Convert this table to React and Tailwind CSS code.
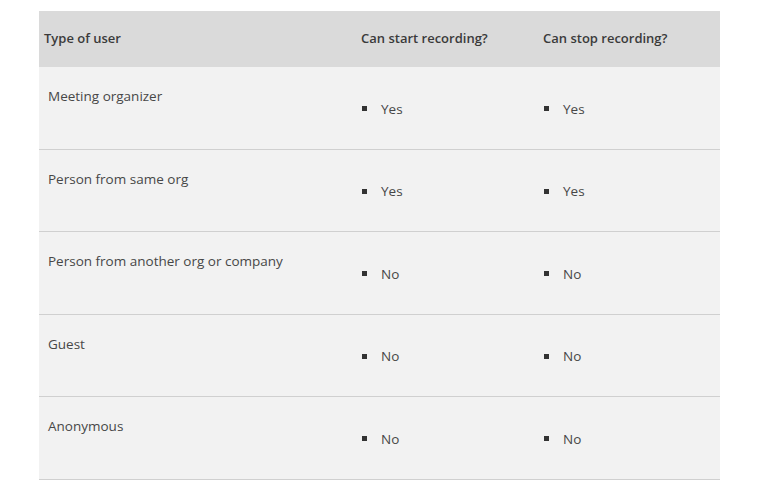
const rows = [
    { user: "Meeting organizer", start: "Yes", stop: "Yes" },
    { user: "Person from same org", start: "Yes", stop: "Yes" },
    { user: "Person from another org or company", start: "No", stop: "No" },
    { user: "Guest", start: "No", stop: "No" },
    { user: "Anonymous", start: "No", stop: "No" },
]

const Bullet = ({ text }) => (
    <div className="flex items-center pt-[2px]">
        <span className="w-[5px] h-[5px] bg-[#333] ml-[1px]" />
        <span className="ml-[14px]">{text}</span>
    </div>
)

const App = () => {
    return (
        <div className="w-[768px] h-[488px] bg-white pt-[11px] pl-[39px] text-[13.5px] text-[#474747]" style={{ fontFamily: '"Open Sans", "Noto Sans", sans-serif' }}>
            <div className="w-[681px]">
                <div className="grid grid-cols-[317px_182px_182px] h-[56px] bg-[#dadada] items-center font-semibold text-[13px] text-[#3a3a3a]">
                    <div className="pl-[5px]">Type of user</div>
                    <div className="pl-[5px]">Can start recording?</div>
                    <div className="pl-[5px]">Can stop recording?</div>
                </div>
                {rows.map((row) => (
                    <div key={row.user} className="grid grid-cols-[317px_182px_182px] h-[82.5px] bg-[#f2f2f2] border-b border-[#d0d0d0]">
                        <div className="pl-[9px] pt-[19px]">{row.user}</div>
                        <div className="pl-[5px] flex items-center">
                            <Bullet text={row.start} />
                        </div>
                        <div className="pl-[5px] flex items-center">
                            <Bullet text={row.stop} />
                        </div>
                    </div>
                ))}
            </div>
        </div>
    )
}

export default App
